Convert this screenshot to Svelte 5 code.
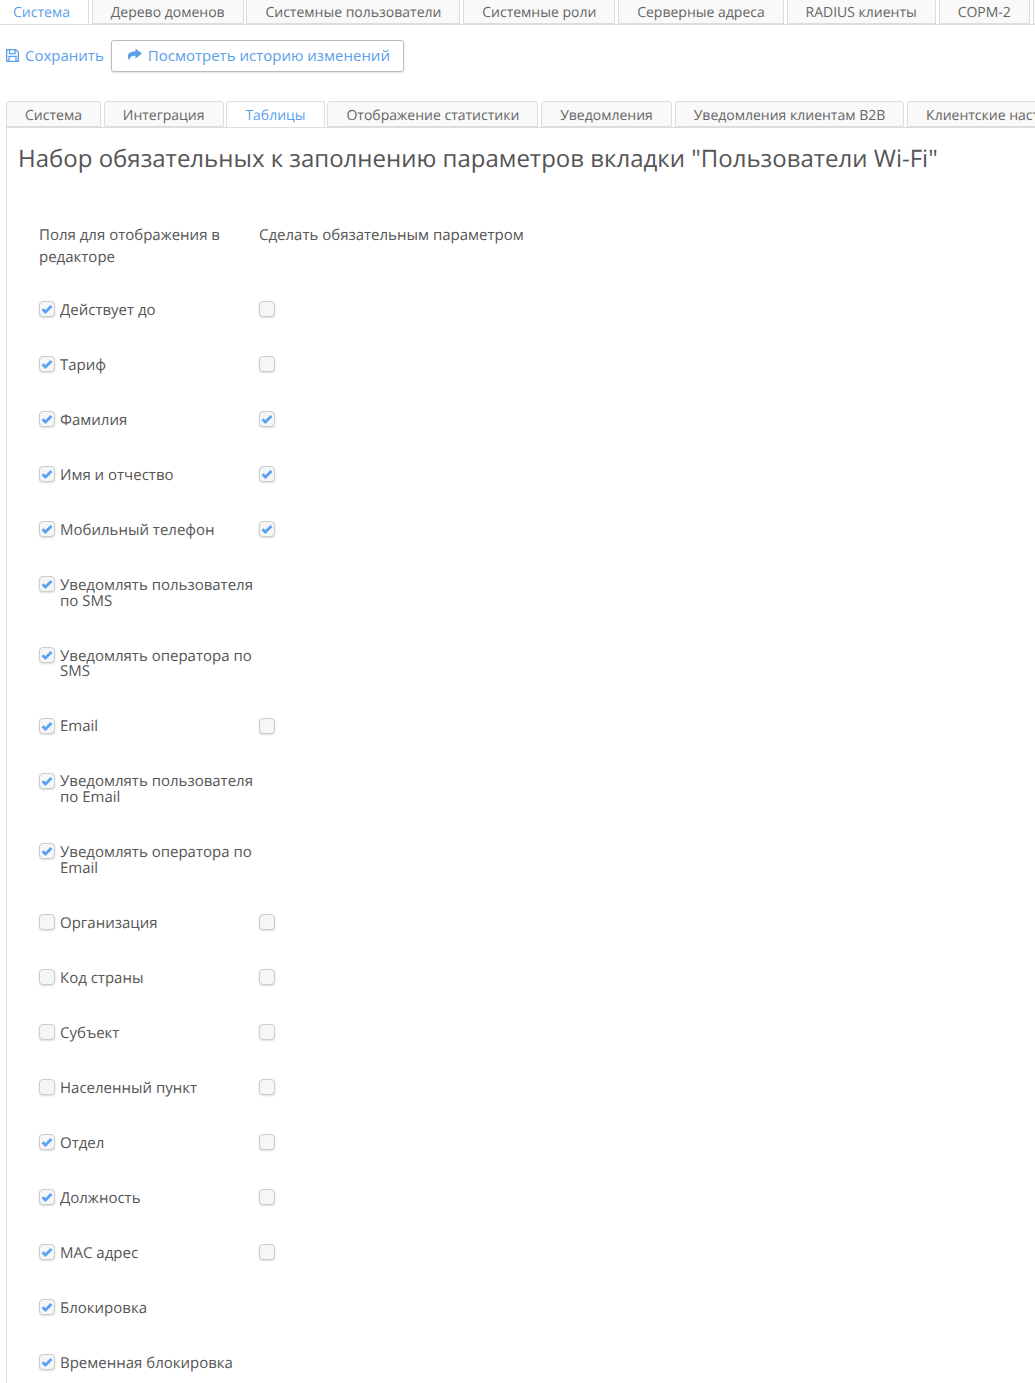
<script>
  const topTabs = ['Система', 'Дерево доменов', 'Системные пользователи', 'Системные роли', 'Серверные адреса', 'RADIUS клиенты', 'СОРМ-2', 'Журнал'];
  const subTabs = ['Система', 'Интеграция', 'Таблицы', 'Отображение статистики', 'Уведомления', 'Уведомления клиентам B2B', 'Клиентские настройки'];

  const fields = [
    { name: 'Действует до', show: true, req: false },
    { name: 'Тариф', show: true, req: false },
    { name: 'Фамилия', show: true, req: true },
    { name: 'Имя и отчество', show: true, req: true },
    { name: 'Мобильный телефон', show: true, req: true },
    { name: 'Уведомлять пользователя по SMS', show: true },
    { name: 'Уведомлять оператора по SMS', show: true },
    { name: 'Email', show: true, req: false },
    { name: 'Уведомлять пользователя по Email', show: true },
    { name: 'Уведомлять оператора по Email', show: true },
    { name: 'Организация', show: false, req: false },
    { name: 'Код страны', show: false, req: false },
    { name: 'Субъект', show: false, req: false },
    { name: 'Населенный пункт', show: false, req: false },
    { name: 'Отдел', show: true, req: false },
    { name: 'Должность', show: true, req: false },
    { name: 'MAC адрес', show: true, req: false },
    { name: 'Блокировка', show: true },
    { name: 'Временная блокировка', show: true }
  ];
</script>

{#snippet checkbox(checked)}
  <span class="check">
    {#if checked}
      <svg width="12" height="10" viewBox="0 0 12 10"><path d="M1.5 5.2 L4.4 8 L10.5 2" fill="none" stroke="#5ba2ee" stroke-width="2.8"/></svg>
    {/if}
  </span>
{/snippet}

<div class="page">
  <ul class="tabs top">
    {#each topTabs as tab, i}
      <li class:active={i === 0}>{tab}</li>
    {/each}
  </ul>

  <div class="toolbar">
    <button class="link">
      <svg width="13" height="13" viewBox="0 0 13 13"><path d="M.7.7 H9.8 L12.3 3.2 V12.3 H.7 Z M3.5 1 V4.6 H9 V1 M3 12.3 V7.4 H10 V12.3" fill="none" stroke="#5a9fe8" stroke-width="1.3"/></svg>
      <span>Сохранить</span>
    </button>
    <button class="history">
      <svg width="15" height="13" viewBox="0 0 16 13"><path d="M9 0 L16 5.5 L9 11 V7.8 C5.5 7.8 3 8.5 2.5 13 C0 10 -1 3 9 3.2 Z" fill="#5a9fe8"/></svg>
      <span>Посмотреть историю изменений</span>
    </button>
  </div>

  <ul class="tabs sub">
    {#each subTabs as tab, i}
      <li class:active={i === 2}>{tab}</li>
    {/each}
  </ul>

  <div class="panel">
    <h3>Набор обязательных к заполнению параметров вкладки "Пользователи Wi-Fi"</h3>
    <div class="grid">
      <div class="head first">Поля для отображения в редакторе</div>
      <div class="head">Сделать обязательным параметром</div>
      {#each fields as f}
        <label class="field">{@render checkbox(f.show)}<span class="name">{f.name}</span></label>
        <div class="req">
          {#if f.req !== undefined}{@render checkbox(f.req)}{/if}
        </div>
      {/each}
    </div>
  </div>
</div>

<style>
  :global(body) {
    overflow: hidden;
  }

  .page {
    width: 1035px;
    height: 1383px;
    overflow: hidden;
    background: #fff;
    font-family: "Open Sans", sans-serif;
    font-size: 14px;
    color: #555;
    text-rendering: geometricPrecision;
  }

  .tabs {
    list-style: none;
    margin: 0;
    padding: 0;
    display: flex;
    gap: 3px;
    white-space: nowrap;
    border-bottom: 1px solid #ddd;
  }

  .tabs li {
    flex: none;
    padding: 0 18px;
    border: 1px solid #ddd;
    background: #f9f9f9;
    color: #666;
    border-radius: 3px 3px 0 0;
    margin-bottom: -1px;
  }

  .tabs li.active {
    background: #fff;
    color: #5a9fe8;
    border-bottom-color: #fff;
  }

  .top {
    height: 24px;
    margin-left: -6px;
    gap: 2.8px;
  }

  .top li {
    height: 24px;
    line-height: 25px;
    border-top: none;
    border-radius: 0;
    box-sizing: border-box;
  }

  .toolbar {
    display: flex;
    align-items: center;
    gap: 7px;
    height: 32px;
    margin-top: 15px;
    padding-left: 6px;
    font-size: 15px;
  }

  button {
    font: inherit;
    color: #5a9fe8;
    background: #fff;
    cursor: pointer;
  }

  .link {
    border: none;
    padding: 0 0 1px;
    display: flex;
    align-items: center;
    gap: 6px;
  }

  .link span,
  .history span {
    position: relative;
    top: -1px;
  }

  .history {
    height: 32px;
    border: 1px solid #bbb;
    border-radius: 3px;
    box-shadow: 0 1px 2px rgba(0, 0, 0, 0.12);
    padding: 0 13px 0 15px;
    display: flex;
    align-items: center;
    gap: 6px;
  }

  .history svg {
    margin-bottom: 4px;
  }

  .sub {
    height: 26px;
    margin: 29px 0 0 6px;
    gap: 2.85px;
  }

  .sub li {
    height: 26px;
    line-height: 27px;
    box-sizing: border-box;
  }

  .panel {
    margin-left: 6px;
    border-left: 1px solid #ddd;
    padding: 0 0 0 11px;
    height: 1300px;
  }

  h3 {
    margin: 0;
    padding-top: 15px;
    font-size: 24px;
    font-weight: 400;
    line-height: 32px;
    color: #555;
    white-space: nowrap;
  }

  .grid {
    display: grid;
    grid-template-columns: 220px 300px;
    margin: 48.7px 0 0 21px;
    font-size: 15px;
  }

  .head {
    line-height: 22.5px;
    padding-bottom: 32.5px;
  }

  .head.first {
    width: 200px;
  }

  .field {
    display: flex;
    align-items: flex-start;
    gap: 5px;
    padding-bottom: 37.4px;
    line-height: 15.8px;
    width: 216px;
  }

  .name {
    padding-top: 1.8px;
  }

  .check {
    flex: none;
    display: flex;
    align-items: center;
    justify-content: center;
    width: 16px;
    height: 16px;
    box-sizing: border-box;
    background: #f5f6f8;
    border: 1px solid #ccc;
    border-radius: 4px;
    box-shadow: 0 1px 2px rgba(0, 0, 0, 0.14);
  }
</style>
